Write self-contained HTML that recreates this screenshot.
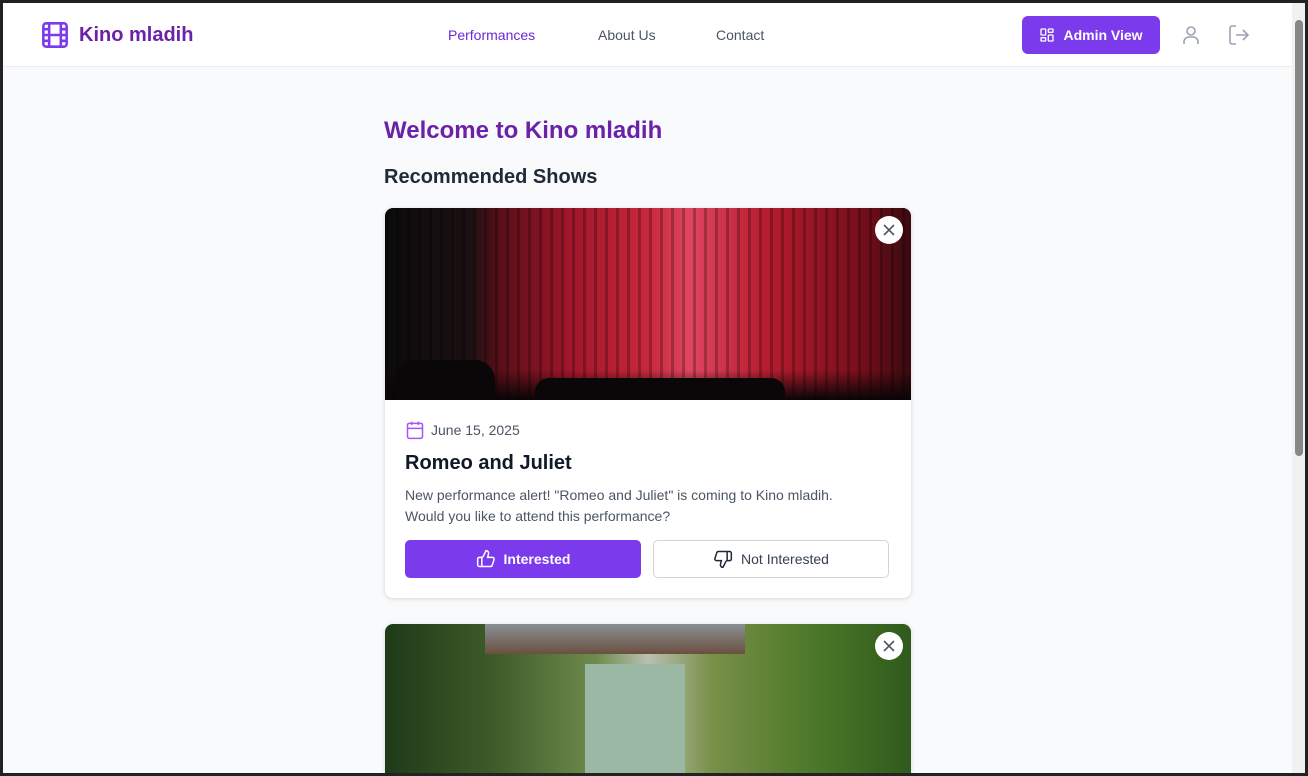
<!DOCTYPE html>
<html><head><meta charset="utf-8"><style>
*{box-sizing:border-box;margin:0;padding:0}
html,body{width:1308px;height:776px;overflow:hidden}
body{font-family:"Liberation Sans",sans-serif;background:#222;position:relative}
.win{position:absolute;left:3px;top:3px;width:1302px;height:770px;background:#f9fafb;overflow:hidden}
.nav{position:absolute;left:0;top:0;width:1289px;height:64px;background:#fff;border-bottom:1px solid #eceef2}
.logo{position:absolute;left:38px;top:18px;display:flex;align-items:center;gap:10px;color:#6b21a8;font-weight:bold;font-size:20px}
.links a{position:absolute;top:24px;font-size:14px;color:#4b5563;text-decoration:none}
.admin{position:absolute;left:1019px;top:13px;width:138px;height:38px;background:#7c3aed;border-radius:6px;color:#fff;font-weight:bold;font-size:14px;display:flex;align-items:center;justify-content:center;gap:8px}
.sb{position:absolute;left:1289px;top:0;width:13px;height:770px;background:#f1f1f1}
.sb div{position:absolute;left:3px;top:17px;width:8px;height:436px;background:#888;border-radius:4px}
h1{position:absolute;left:381px;top:114px;font-size:24px;color:#6b21a8}
h2{position:absolute;left:381px;top:163px;font-size:20px;color:#1f2937;font-weight:600}
.card{position:absolute;left:382px;width:526px;background:#fff;border-radius:8px;box-shadow:0 1px 4px rgba(0,0,0,.15);overflow:hidden}
.x{position:absolute;right:8px;top:8px;width:28px;height:28px;border-radius:50%;background:#fff;display:flex;align-items:center;justify-content:center}
.btn{position:absolute;top:332px;width:236px;height:38px;border-radius:5px;display:flex;align-items:center;justify-content:center;gap:8px;font-size:14px}
</style></head><body><div class="win">
<div class="nav">
<div class="logo"><svg width="28" height="28" viewBox="0 0 24 24" fill="none" stroke="#7c3aed" stroke-width="2.2"><rect x="2" y="2" width="20" height="20" rx="2.5"/><path d="M7 2v20M17 2v20M2 12h20M2 7h5M2 17h5M17 7h5M17 17h5"/></svg>Kino mladih</div>
<div class="links"><a style="left:445px;color:#6d28d9">Performances</a><a style="left:595px">About Us</a><a style="left:713px">Contact</a></div>
<div class="admin"><svg width="16" height="16" viewBox="0 0 24 24" fill="none" stroke="#fff" stroke-width="2"><rect x="3" y="3" width="7" height="9" rx="1"/><rect x="14" y="3" width="7" height="5" rx="1"/><rect x="14" y="12" width="7" height="9" rx="1"/><rect x="3" y="16" width="7" height="5" rx="1"/></svg>Admin View</div>
<svg style="position:absolute;left:1176px;top:20px" width="24" height="24" viewBox="0 0 24 24" fill="none" stroke="#9ca3af" stroke-width="1.6"><circle cx="12" cy="8" r="4"/><path d="M5 21v-2a5 5 0 0 1 5-5h4a5 5 0 0 1 5 5v2"/></svg>
<svg style="position:absolute;left:1224px;top:20px" width="24" height="24" viewBox="0 0 24 24" fill="none" stroke="#9ca3af" stroke-width="1.6"><path d="M9 21H5a2 2 0 0 1-2-2V5a2 2 0 0 1 2-2h4M16 17l5-5-5-5M21 12H9"/></svg>
</div>
<h1>Welcome to Kino mladih</h1>
<h2>Recommended Shows</h2>
<div class="card" style="top:205px;height:390px">
<div style="height:192px;background:linear-gradient(90deg,#0c0a0b 0%,#1a1012 16%,#5a0f18 22%,#a0162a 35%,#c8283c 50%,#e04660 58%,#b81d30 72%,#7a0f1c 90%,#3a0a10 100%);position:relative">
<div style="position:absolute;inset:0;background:repeating-linear-gradient(90deg,rgba(0,0,0,.25) 0 3px,rgba(0,0,0,0) 3px 11px)"></div>
<div style="position:absolute;left:0;right:0;bottom:0;height:30px;background:linear-gradient(0deg,#080506,rgba(8,5,6,0))"></div>
<div style="position:absolute;left:10px;bottom:0;width:100px;height:40px;background:#0a0708;border-radius:20px 20px 0 0"></div>
<div style="position:absolute;left:150px;bottom:0;width:250px;height:22px;background:#0a0708;border-radius:14px 14px 0 0"></div>
<div class="x"><svg width="14" height="14" viewBox="0 0 14 14" stroke="#4b5563" stroke-width="1.6"><path d="M2 2l10 10M12 2L2 12"/></svg></div>
</div>
<div style="position:absolute;left:20px;top:212px;display:flex;align-items:center;gap:6px;font-size:14px;color:#4b5563"><svg width="20" height="20" viewBox="0 0 24 24" fill="none" stroke="#a855f7" stroke-width="1.8"><rect x="3" y="4" width="18" height="18" rx="2"/><path d="M3 10h18M8 2v4M16 2v4"/></svg>June 15, 2025</div>
<div style="position:absolute;left:20px;top:244px;font-size:20px;font-weight:600;color:#111827">Romeo and Juliet</div>
<div style="position:absolute;left:20px;top:277px;font-size:14px;line-height:21px;color:#4b5563;width:460px">New performance alert! "Romeo and Juliet" is coming to Kino mladih. Would you like to attend this performance?</div>
<div class="btn" style="left:20px;background:#7c3aed;color:#fff;font-weight:bold"><svg width="20" height="20" viewBox="0 0 24 24" fill="none" stroke="#fff" stroke-width="1.8"><path d="M7 10v11M15 5.9L14 10h5.8a2 2 0 0 1 1.9 2.6l-2.3 7A2 2 0 0 1 17.5 21H4a2 2 0 0 1-2-2v-7a2 2 0 0 1 2-2h2.8a2 2 0 0 0 1.8-1.1L12 2a3 3 0 0 1 3 3.9z"/></svg>Interested</div>
<div class="btn" style="left:268px;border:1px solid #d1d5db;color:#374151"><svg width="20" height="20" viewBox="0 0 24 24" fill="none" stroke="#1f2937" stroke-width="1.8"><path d="M17 14V3M9 18.1L10 14H4.2a2 2 0 0 1-1.9-2.6l2.3-7A2 2 0 0 1 6.5 3H20a2 2 0 0 1 2 2v7a2 2 0 0 1-2 2h-2.8a2 2 0 0 0-1.8 1.1L12 22a3 3 0 0 1-3-3.9z"/></svg>Not Interested</div>
</div>
<div class="card" style="top:621px;height:200px">
<div style="height:200px;background:linear-gradient(90deg,#1f3a18 0%,#3c5a28 20%,#6e8a4c 40%,#b8c0b0 50%,#7a9048 62%,#4e7a2a 80%,#2f5a1c 100%);position:relative">
<div style="position:absolute;left:100px;top:0;width:260px;height:30px;background:linear-gradient(#8a8f94,#6a5040)"></div>
<div style="position:absolute;left:200px;top:40px;width:100px;height:110px;background:#9ab8a4"></div>
<div class="x"><svg width="14" height="14" viewBox="0 0 14 14" stroke="#4b5563" stroke-width="1.6"><path d="M2 2l10 10M12 2L2 12"/></svg></div>
</div></div>
<div class="sb"><div></div></div>
</div></body></html>
